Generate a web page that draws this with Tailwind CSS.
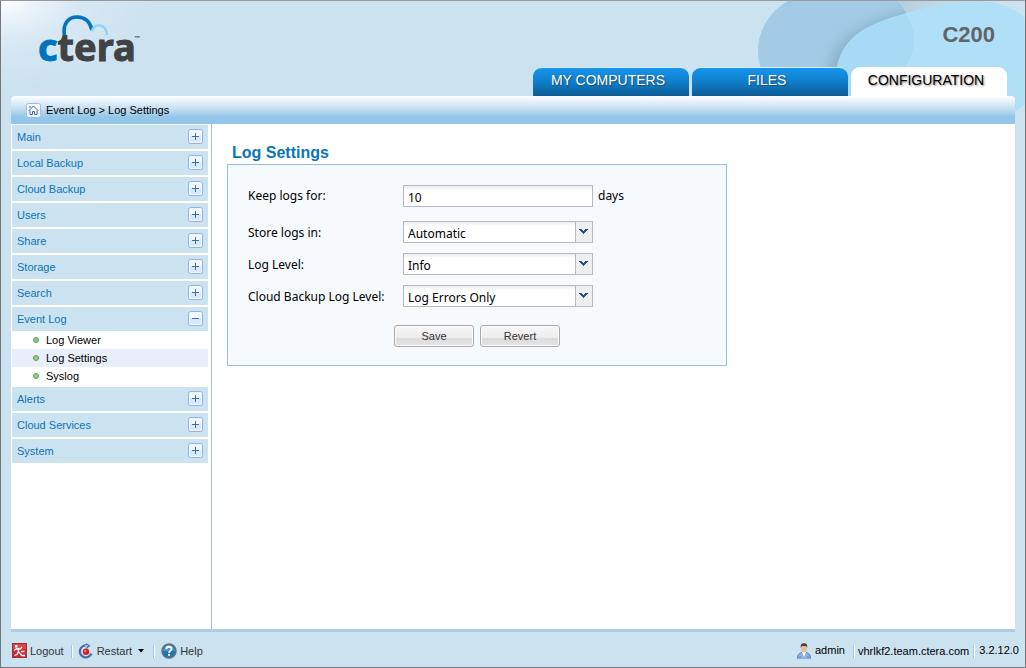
<!DOCTYPE html>
<html lang="en">
<head>
  <meta charset="utf-8">
  <meta name="viewport" content="width=device-width, initial-scale=1.0">
  <title>CTERA C200 - Log Settings</title>
  <script src="https://cdn.jsdelivr.net/npm/@tailwindcss/browser@4"></script>
</head>
<body class="font-['Liberation_Sans',Arial,sans-serif] text-[11px] text-black">
  <div class="relative isolate min-h-screen flex flex-col border border-[#777] border-t-[#999] bg-[#cbe2f0] overflow-hidden">
    <!-- header background -->
    <div class="absolute -z-10 left-0 top-0 w-[160px] h-[90px] bg-[radial-gradient(ellipse_farthest-side_at_top_left,#ffffff_0%,#ffffff99_20%,#ffffff33_50%,#ffffff00_100%)]"></div>
    <svg class="absolute -z-10 right-0 top-0" width="286" height="200" viewBox="739 0 286 200" aria-hidden="true">
      <defs>
        <linearGradient id="rimShade" x1="0" y1="0" x2="1" y2="0">
          <stop offset="0" stop-color="#b5cfdf"/>
          <stop offset="1" stop-color="#cbe2f0"/>
        </linearGradient>
        <filter id="soft" x="-20%" y="-20%" width="140%" height="140%"><feGaussianBlur stdDeviation="7"/></filter>
        <clipPath id="bigBlob"><path d="M788 0C767 12 758 32 758 50c0 24 16 46 50 50h40c40 0 66-28 66-62 0-14-4-27-16-38z"/></clipPath>
      </defs>
      <path d="M788 0C767 12 758 32 758 50c0 24 16 46 50 50h40c40 0 66-28 66-62 0-14-4-27-16-38z" fill="#a3cbe5"/>
      <g clip-path="url(#bigBlob)">
        <path d="M830 110C816 36 860 26 905 11l30 0v100z" fill="#86b0c6" filter="url(#soft)"/>
      </g>
      <path d="M898 0q6 6 8 13q40-12 74-13z" fill="url(#rimShade)"/>
      <path d="M836 80C836 30 878 20 918 9C950 1 975-2 996 2q19 5 29 15V104q-8 6-14 8H848z" fill="#b0e0f8"/>
      <path d="M836 80C836 35 868 23 906 13q9 13 8 28c-1 22-18 39-38 48q-20 6-40 8z" fill="#a7daf4"/>
    </svg>

    <header class="flex items-end justify-between h-[95px] pl-[37px] pr-[18px]">
      <a href="#" class="relative self-start mt-[14px]" aria-label="ctera">
        <svg width="110" height="56" viewBox="38 15 110 56">
          <path d="M64.500 36C62.500 24 68 17 77 17C85 17 90 22 92 30" fill="none" stroke="#0074bf" stroke-width="3.600"/>
          <path d="M92 31C94 23 106 23 107 35" fill="none" stroke="#8bd3f7" stroke-width="2.400"/>
          <text x="38" y="61" font-family="'Noto Sans',sans-serif" font-weight="700" font-size="38" fill="#424244" stroke="#424244" stroke-width="1"><tspan fill="#0074bf" stroke="#0074bf">c</tspan>tera</text>
          <text x="134" y="40" font-family="'Liberation Sans',Arial,sans-serif" font-weight="700" font-size="6" fill="#424244">™</text>
        </svg>
      </a>
      <div class="self-stretch flex flex-col justify-between">
        <div class="text-right text-[22px] leading-[24px] font-bold text-[#636467] mt-[22px] pr-[12px]">C200</div>
        <nav class="flex gap-[3px] text-[14px] text-center">
          <a href="#" class="w-[156px] h-[29px] pt-[2px] pr-[6px] leading-[20px] rounded-t-[9px] border-t border-[#d5eefd] text-white bg-linear-to-b from-[#1695ee] via-[#0f7ecb] to-[#0c5c96] [text-shadow:1px_1px_1px_#2a4a66]">MY COMPUTERS</a>
          <a href="#" class="w-[156px] h-[29px] pt-[2px] pr-[6px] leading-[20px] rounded-t-[9px] border-t border-[#d5eefd] text-white bg-linear-to-b from-[#1695ee] via-[#0f7ecb] to-[#0c5c96] [text-shadow:1px_1px_1px_#2a4a66]">FILES</a>
          <a href="#" aria-current="page" class="w-[156px] h-[29px] pt-[2px] pr-[6px] leading-[20px] rounded-t-[9px] border-t border-white bg-white [text-shadow:1px_1px_2px_#888]">CONFIGURATION</a>
        </nav>
      </div>
    </header>

    <div class="flex items-center gap-[5px] h-[28px] mx-[10px] pl-[15px] rounded-t-[4px] bg-linear-to-b from-white via-[#bedcf0] via-50% to-[#93c6e8] to-75%">
      <a href="#" aria-label="Home">
        <svg width="15" height="15" viewBox="0 0 15 15">
          <rect x="0.500" y="0.500" width="14" height="14" rx="2" fill="#f4f9ff" stroke="#9bbce8"/>
          <path d="M2.500 8L7.500 3L12.500 8M4 7.500V11.500H6.500V8.500H8.500V11.500H11V7.500M4 5V3" fill="none" stroke="#3f6da8"/>
        </svg>
      </a>
      <span>Event Log &gt; Log Settings</span>
    </div>

    <div class="flex flex-1 mx-[10px] bg-white border-b-[3px] border-[#aecde3]">
      <aside class="w-[201px] shrink-0 border-r border-[#99bbe8] pt-px pl-px pr-[3px]">
        <ul id="menu" class="flex flex-col gap-[2px]"></ul>
      </aside>

      <main class="flex-1 pl-[15px] pt-[19px]">
        <h1 class="pl-[5px] text-[16px] leading-[20px] font-bold text-[#0b74b8]">Log Settings</h1>
        <form class="w-[500px] mt-px pt-[20px] pb-[18px] pl-[20px] border border-[#99bbe8] bg-[#f6fafd] font-['Noto_Sans',Tahoma,sans-serif] text-[12px]">
          <div class="flex items-center mb-[14px]">
            <label for="keep" class="w-[155px]">Keep logs for:</label>
            <input id="keep" type="text" value="10" class="w-[190px] h-[22px] pl-1 pt-[2px] border border-[#b5b8c8] bg-white bg-linear-to-b from-[#e9ecec] to-white to-20%">
            <label for="keep" class="pl-[5px]">days</label>
          </div>
          <div class="flex items-center mb-[10px]">
            <label for="store" class="w-[155px] pt-[2px]">Store logs in:</label>
            <div class="relative w-[190px]">
              <select id="store" class="block appearance-none w-full h-[22px] pl-1 pt-[3px] border border-[#b5b8c8] bg-white bg-linear-to-b from-[#e9ecec] to-white to-20%"><option>Automatic</option></select>
              <svg class="absolute right-px top-px pointer-events-none" width="17" height="20" viewBox="0 0 17 20"><path d="M0 0H17V20H0z" fill="#efefef"/><path d="M0.500 0V20" stroke="#b5b8c8"/><path d="M4 7h3v1h1v1h1v-1h1v-1h3v1h-1v1h-1v1h-1v1h-1v1h-1v-1h-1v-1h-1v-1h-1v-1h-1z" fill="#2d4f91"/></svg>
            </div>
          </div>
          <div class="flex items-center mb-[10px]">
            <label for="level" class="w-[155px] pt-[2px]">Log Level:</label>
            <div class="relative w-[190px]">
              <select id="level" class="block appearance-none w-full h-[22px] pl-1 pt-[3px] border border-[#b5b8c8] bg-white bg-linear-to-b from-[#e9ecec] to-white to-20%"><option>Info</option></select>
              <svg class="absolute right-px top-px pointer-events-none" width="17" height="20" viewBox="0 0 17 20"><path d="M0 0H17V20H0z" fill="#efefef"/><path d="M0.500 0V20" stroke="#b5b8c8"/><path d="M4 7h3v1h1v1h1v-1h1v-1h3v1h-1v1h-1v1h-1v1h-1v1h-1v-1h-1v-1h-1v-1h-1v-1h-1z" fill="#2d4f91"/></svg>
            </div>
          </div>
          <div class="flex items-center">
            <label for="cloudLevel" class="w-[155px] pt-[2px]">Cloud Backup Log Level:</label>
            <div class="relative w-[190px]">
              <select id="cloudLevel" class="block appearance-none w-full h-[22px] pl-1 pt-[3px] border border-[#b5b8c8] bg-white bg-linear-to-b from-[#e9ecec] to-white to-20%"><option>Log Errors Only</option></select>
              <svg class="absolute right-px top-px pointer-events-none" width="17" height="20" viewBox="0 0 17 20"><path d="M0 0H17V20H0z" fill="#efefef"/><path d="M0.500 0V20" stroke="#b5b8c8"/><path d="M4 7h3v1h1v1h1v-1h1v-1h3v1h-1v1h-1v1h-1v1h-1v1h-1v-1h-1v-1h-1v-1h-1v-1h-1z" fill="#2d4f91"/></svg>
            </div>
          </div>
          <div class="flex gap-[6px] mt-[18px] pl-[146px] font-['Liberation_Sans',Arial,sans-serif] text-[11px] text-[#333]">
            <button type="submit" class="w-[80px] h-[22px] rounded-[3px] border border-[#aaa] shadow-[inset_0_0_0_1px_#fafafa] bg-[linear-gradient(#f7f7f7,#ececec_60%,#dcdcdc_60%,#e4e4e4)]">Save</button>
            <button type="reset" class="w-[80px] h-[22px] rounded-[3px] border border-[#aaa] shadow-[inset_0_0_0_1px_#fafafa] bg-[linear-gradient(#f7f7f7,#ececec_60%,#dcdcdc_60%,#e4e4e4)]">Revert</button>
          </div>
        </form>
      </main>
    </div>

    <footer class="flex items-center justify-between h-[35px] pl-[10px] pr-[6px] pt-[3px]">
      <div class="flex items-center text-[#333]">
        <button type="button" class="flex items-center gap-[3px]">
          <svg width="16" height="16" viewBox="0 0 16 16">
            <rect x="1.500" y="0.500" width="14" height="14" fill="#cf2a2c" stroke="#9c3436"/>
            <path d="M2 1H15V6H2z" fill="#e0595a" opacity="0.6"/>
            <rect x="4" y="2" width="2.500" height="2.500" fill="#fff"/>
            <path d="M3 7.500L6 5.500L9 6L11 4M6.500 5.500L8 9.500L11 12.500H14M7.500 8.500L6 11.500L3.500 12.500M10 8.500H13.500" fill="none" stroke="#fff" stroke-width="1.300"/>
          </svg>
          Logout
        </button>
        <span class="w-[2px] h-[13px] ml-[7px] mr-[5px] bg-[#98c8ff] border-r border-white"></span>
        <button type="button" class="flex items-center gap-[3px]">
          <svg width="16" height="16" viewBox="0 0 16 16">
            <path d="M9 2.500A6 6 0 1 0 13.500 10.500" fill="none" stroke="#4a6ea9" stroke-width="2.200"/>
            <path d="M8 0L12.500 2.800L8.500 6z" fill="#4a6ea9"/>
            <path d="M7 2.300L10.500 2.600L8.500 4z" fill="#dbe8f7"/>
            <circle cx="8" cy="8.800" r="3.200" fill="#d81e27"/>
            <circle cx="7.300" cy="8" r="1.200" fill="#f0767a"/>
          </svg>
          Restart
          <svg class="ml-[3px]" width="6" height="4" viewBox="0 0 6 4"><path d="M0 0H6L3 3.500z" fill="#000"/></svg>
        </button>
        <span class="w-[2px] h-[13px] ml-[9px] mr-[6px] bg-[#98c8ff] border-r border-white"></span>
        <button type="button" class="flex items-center gap-[3px]">
          <svg width="16" height="16" viewBox="0 0 16 16">
            <circle cx="8" cy="8" r="7" fill="#1f74b5" stroke="#63717c" stroke-width="1.500"/>
            <path d="M2 8a6 6 0 0 1 12 0z" fill="#5ba4d6" opacity="0.6"/>
            <path d="M5.300 6.200C5.300 2.800 10.700 3 10.500 6C10.400 7.700 8 7.700 8 9.800" fill="none" stroke="#fff" stroke-width="1.900"/>
            <rect x="7" y="10.800" width="2" height="2" fill="#fff"/>
          </svg>
          Help
        </button>
      </div>
      <div class="flex items-center">
        <svg class="mr-[3px]" width="16" height="16" viewBox="0 0 16 16">
          <path d="M1 16c0-5 2-6 5-6.500h4c3 .5 5 1.500 5 6.500z" fill="#8db2e3"/>
          <path d="M1.500 15.500c0-4 2-5.500 4.500-6M14.500 15.500c0-4-2-5.500-4.500-6M4 13v2.500M12 13v2.500" fill="none" stroke="#5c82bb"/>
          <path d="M6 9h4l-2 5z" fill="#fff"/>
          <ellipse cx="8" cy="5.500" rx="2.800" ry="3.800" fill="#e5bd96"/>
          <path d="M4.800 5C4.300 1 6 .3 8 .3s3.700.7 3.200 4.700c-.6-2-1.500-2-3.200-2s-2.600 0-3.200 2z" fill="#4d4035"/>
        </svg>
        <span class="pb-[2px]">admin</span>
        <span class="w-[2px] h-[13px] ml-[8px] mr-[3px] bg-[#98c8ff] border-r border-white"></span>
        <span>vhrlkf2.team.ctera.com</span>
        <span class="w-[2px] h-[13px] ml-[4px] mr-[4px] bg-[#98c8ff] border-r border-white"></span>
        <span class="pb-[2px]">3.2.12.0</span>
      </div>
    </footer>
  </div>

  <script>
    const MENU = [
      { name: "Main" },
      { name: "Local Backup" },
      { name: "Cloud Backup" },
      { name: "Users" },
      { name: "Share" },
      { name: "Storage" },
      { name: "Search" },
      { name: "Event Log", items: ["Log Viewer", "Log Settings", "Syslog"] },
      { name: "Alerts" },
      { name: "Cloud Services" },
      { name: "System" }
    ];

    const toggleIcon = (open) => `
      <svg width="15" height="15" viewBox="0 0 15 15">
        <rect x="0.500" y="0.500" width="14" height="14" rx="2" fill="#f2f8ff" stroke="#8fb4e6"/>
        <rect x="2" y="7" width="11" height="6" fill="#d9e9fb"/>
        <path d="M4 7.500H11${open ? "" : "M7.500 4V11"}" stroke="#3f6da8" fill="none"/>
      </svg>`;

    const subItem = (name) => `
      <li class="${name === "Log Settings" ? "bg-[#e8effb]" : ""}">
        <a href="#" class="flex items-center gap-[7px] h-[18px] pl-[21px]">
          <svg width="6" height="6" viewBox="0 0 6 6"><circle cx="3" cy="3" r="2.500" fill="#8ccb86" stroke="#5da65b"/></svg>
          ${name}
        </a>
      </li>`;

    document.getElementById("menu").innerHTML = MENU.map((m) => `
      <li>
        <button type="button" class="flex items-start justify-between w-full h-[24px] pt-[4px] px-[5px] leading-[16px] bg-[#cbe2f0] text-[#0b74b8]" aria-expanded="${!!m.items}">
          ${m.name}${toggleIcon(m.items)}
        </button>
        ${m.items ? `<ul>${m.items.map(subItem).join("")}</ul>` : ""}
      </li>`).join("");
  </script>
</body>
</html>
